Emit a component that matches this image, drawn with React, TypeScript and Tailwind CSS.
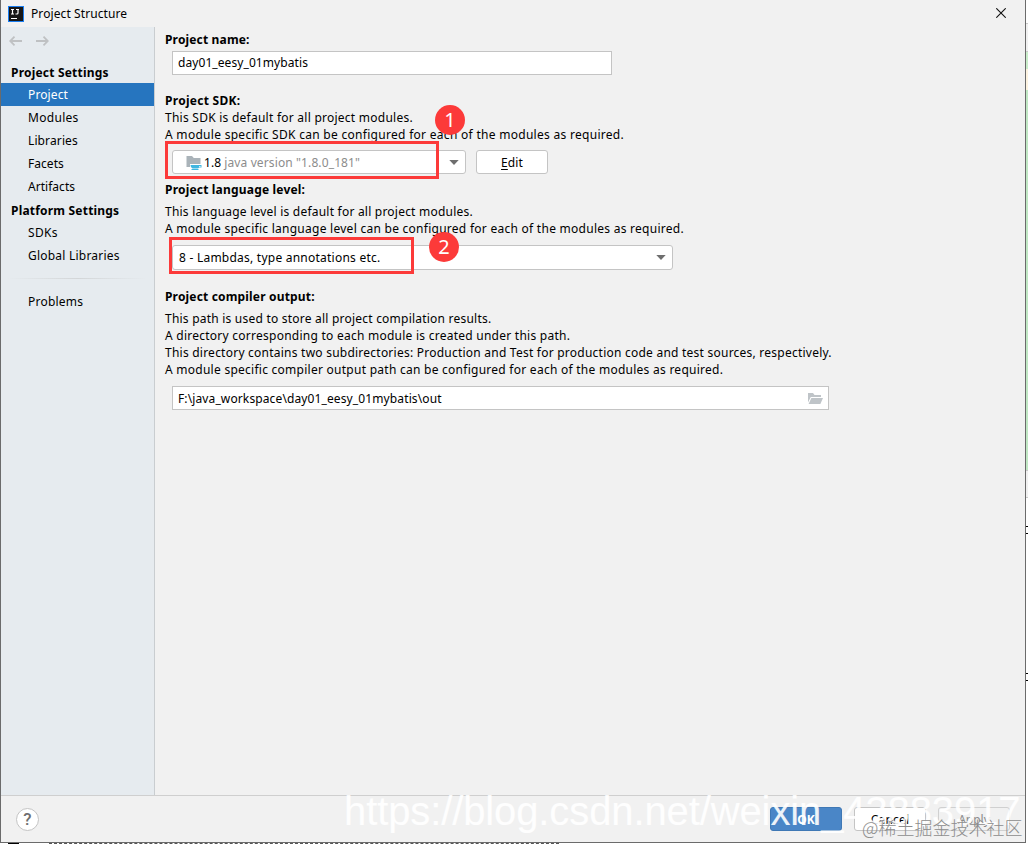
import React from 'react';

const ArrowDown: React.FC = () => (
  <svg className="h-[5px] w-[10px] shrink-0" viewBox="0 0 10 5">
    <path d="M0.3 0H9.7L5 5Z" fill="#6e6e6e" />
  </svg>
);

const SidebarItem: React.FC<{ label: string; spacing: string; selected?: boolean }> = ({
  label,
  spacing,
  selected,
}) => (
  <div
    className={`flex h-[23px] items-center pl-[27px] ${
      selected ? 'bg-[#2675bf] text-white' : ''
    }`}
  >
    <span className={spacing}>{label}</span>
  </div>
);

const SidebarGroup: React.FC<{ label: string; spacing: string }> = ({ label, spacing }) => (
  <div className="flex h-[23px] items-center pl-[10px] pt-[2px] font-bold">
    <span className={spacing}>{label}</span>
  </div>
);

const Line: React.FC<{ spacing: string; bold?: boolean; children: React.ReactNode }> = ({
  spacing,
  bold,
  children,
}) => (
  <div className={`h-[17px] leading-[17px] ${bold ? 'font-bold' : ''}`}>
    <span className={spacing}>{children}</span>
  </div>
);

const Sidebar: React.FC = () => (
  <aside className="w-[154px] shrink-0 border-r border-[#c9cdd0] bg-[#e6ebef]">
    <div className="flex h-[33px] items-start gap-[14px] pl-2 pt-[9px]">
      <svg className="h-[10px] w-[13px]" viewBox="0 0 13 10" fill="none" stroke="#bfc1c3" strokeWidth="1.8">
        <path d="M13 5H1.2M5.5 0.7L1.2 5L5.5 9.3" />
      </svg>
      <svg className="h-[10px] w-[13px]" viewBox="0 0 13 10" fill="none" stroke="#bfc1c3" strokeWidth="1.8">
        <path d="M0 5H11.8M7.5 0.7L11.8 5L7.5 9.3" />
      </svg>
    </div>
    <SidebarGroup label="Project Settings" spacing="tracking-[0.2px]" />
    <SidebarItem label="Project" spacing="tracking-[0.12px]" selected />
    <SidebarItem label="Modules" spacing="tracking-[0.3px]" />
    <SidebarItem label="Libraries" spacing="tracking-[0.12px]" />
    <SidebarItem label="Facets" spacing="tracking-[0.05px]" />
    <SidebarItem label="Artifacts" spacing="tracking-[0.03px]" />
    <SidebarGroup label="Platform Settings" spacing="tracking-[0.2px]" />
    <SidebarItem label="SDKs" spacing="tracking-[0.3px]" />
    <SidebarItem label="Global Libraries" spacing="tracking-[0.22px]" />
    <div className="mx-[7px] mb-[11px] mt-[11px] h-px bg-linear-to-r from-transparent via-[#d3d6d8] to-transparent" />
    <SidebarItem label="Problems" spacing="tracking-[0.22px]" />
  </aside>
);

const App: React.FC = () => {
  return (
    <div className="relative flex h-[844px] w-[1028px] overflow-hidden bg-white font-['Noto_Sans','Noto_Sans_CJK_SC',sans-serif] text-[12px] leading-[17px] text-black">
      <div className="w-[1026px]">
        <div className="flex h-[843px] flex-col border-b border-l border-r border-[#6b6b6b] bg-[#f1f1f1]">
          {/* Title bar */}
          <header className="flex h-[27px] shrink-0 items-center pl-[7px] pr-[19px]">
            <svg className="h-4 w-4" viewBox="0 0 16 16">
              <rect width="16" height="16" fill="#1a7df0" />
              <rect x="1" y="1" width="14" height="14" fill="#161616" />
              <path d="M3 3.5H6M4.5 3.5V8M3 8H6M8 3.5H11M10 3.5V7Q10 8 9 8H7.5" fill="none" stroke="#fff" strokeWidth="1.2" />
              <rect x="3" y="12" width="6" height="1" fill="#fff" />
            </svg>
            <span className="ml-[7px] tracking-[0.09px]">Project Structure</span>
            <svg className="mb-[2px] ml-auto h-[10px] w-[10px]" viewBox="0 0 10 10" stroke="#111" strokeWidth="1.1">
              <path d="M0.3 0.3L9.7 9.7M9.7 0.3L0.3 9.7" />
            </svg>
          </header>

          {/* Body */}
          <div className="flex h-[768px] shrink-0">
            <Sidebar />
            <main className="flex flex-1 flex-col pl-[10px] pt-1">
              <Line bold spacing="tracking-[0.16px]">Project name:</Line>
              <div className="ml-[7px] mt-[3px] flex h-6 w-[440px] items-center border border-[#c4c4c4] bg-white pb-px pl-[5px]">
                <span className="tracking-[0.08px]">day01_eesy_01mybatis</span>
              </div>

              <div className="mt-[17px]">
                <Line bold spacing="tracking-[0.28px]">Project SDK:</Line>
                <Line spacing="tracking-[0.25px]">This SDK is default for all project modules.</Line>
                <Line spacing="tracking-[0.29px]">
                  A module specific SDK can be configured for each of the modules as required.
                </Line>
              </div>
              <div className="ml-[7px] mt-[7px] flex gap-[10px]">
                <div className="flex h-6 w-[294px] items-center rounded-[3px] border border-[#c4c4c4] bg-white pl-[13px] pr-[6px]">
                  <svg className="mt-px h-[14px] w-[16px]" viewBox="0 0 16 14">
                    <path d="M0.5 0H6L7.8 2H14.5V8H4V11H0.5Z" fill="#aab3b9" />
                    <path d="M4.5 9H15.5V11.5H13.2Q12.5 12.5 11.5 12.6H6.5Q4.5 12 4.5 9Z" fill="#40b6e0" />
                    <path d="M13 10H14.6V10.8H13Z" fill="#fff" />
                    <path d="M5.5 13H12.5V14H5.5Z" fill="#40b6e0" />
                  </svg>
                  <span className="ml-[2px] tracking-[0.1px]">1.8</span>
                  <span className="ml-[3px] tracking-[0.12px] text-[#8c8c8c]">java version "1.8.0_181"</span>
                  <div className="ml-auto">
                    <ArrowDown />
                  </div>
                </div>
                <button className="h-6 w-[72px] rounded-[3px] border border-[#c4c4c4] bg-white text-center leading-[23px] tracking-[0.1px]">
                  <span className="underline underline-offset-2">E</span>dit
                </button>
              </div>

              <div className="mt-[7px]">
                <Line bold spacing="tracking-[0.19px]">Project language level:</Line>
              </div>
              <div className="mt-[5px]">
                <Line spacing="tracking-[0.22px]">This language level is default for all project modules.</Line>
                <Line spacing="tracking-[0.265px]">
                  A module specific language level can be configured for each of the modules as required.
                </Line>
              </div>
              <div className="ml-[7px] mt-2 flex h-[25px] w-[501px] items-center justify-between rounded-[3px] border border-[#c4c4c4] bg-white pl-[6px] pr-[6px]">
                <span className="tracking-[0.235px]">8 - Lambdas, type annotations etc.</span>
                <ArrowDown />
              </div>

              <div className="mt-[18px]">
                <Line bold spacing="tracking-[0.17px]">Project compiler output:</Line>
              </div>
              <div className="mt-[5px]">
                <Line spacing="tracking-[0.22px]">This path is used to store all project compilation results.</Line>
                <Line spacing="tracking-[0.25px]">A directory corresponding to each module is created under this path.</Line>
                <Line spacing="tracking-[0.235px]">
                  This directory contains two subdirectories: Production and Test for production code and test sources, respectively.
                </Line>
                <Line spacing="tracking-[0.26px]">
                  A module specific compiler output path can be configured for each of the modules as required.
                </Line>
              </div>
              <div className="ml-[7px] mt-2 flex h-6 w-[657px] items-center justify-between border border-[#c4c4c4] bg-white pl-[5px] pr-[5px]">
                <span className="tracking-[0.12px]">F:\java_workspace\day01_eesy_01mybatis\out</span>
                <svg className="h-[11px] w-[15px]" viewBox="0 0 15 11" fill="#bfc4c8">
                  <path d="M0 9.5V0H5L6.5 2H13V4H2.8Z" />
                  <path d="M3.4 5H15L12.4 11H0.6Z" />
                </svg>
              </div>
            </main>
          </div>

          {/* Footer */}
          <footer className="flex flex-1 items-start border-t border-[#cfcfcf] pl-[15px] pr-[15px] pt-[11px]">
            <div className="mt-px flex h-[23px] w-[23px] items-center justify-center rounded-full border border-[#c4c4c4] bg-white font-['Roboto',sans-serif] text-[17px] font-medium text-[#6e6e6e]">
              ?
            </div>
            <div className="ml-auto flex gap-3">
              <button className="h-6 w-[72px] rounded-[3px] border border-[#3f78b5] bg-[#4a86c7] font-bold text-white">OK</button>
              <button className="h-6 w-[72px] rounded-[3px] border border-[#c4c4c4] bg-white tracking-[0.2px]">Cancel</button>
              <button className="h-6 w-[72px] rounded-[3px] border border-[#d0d0d0] text-[#8c8c8c]">Apply</button>
            </div>
          </footer>
        </div>
        {/* Top edge of the editor line below the dialog */}
        <div className="flex h-px gap-[30px] pl-2">
          <div className="w-[11px] bg-black" />
          <div className="w-[510px] border-t border-dashed border-[#555]" />
        </div>
      </div>

      {/* Editor strip behind the dialog */}
      <div className="h-[844px] w-[2px] bg-white">
        <div className="h-[24px] border-b border-[#c9c9c9]" />
        <div className="h-[28px] border-b border-[#c9c9c9] bg-[#f1f1f1]" />
        <div className="h-[17px] bg-[#c9edca]" />
        <div className="h-[21px] bg-[#fdf3e0]" />
        <div className="h-[380px] bg-[#c0e8c4]" />
        <div className="h-[28px] border-b border-t border-[#c9c9c9] bg-[#f1f1f1]" />
        <div className="mt-[28px] h-[8px] border-b border-t border-black" />
        <div className="mt-[139px] h-[8px] border-b border-t border-black" />
      </div>

      {/* Annotations */}
      <div className="absolute left-[165px] top-[141px] h-[38px] w-[274px] border-3 border-[#fc3a39]" />
      <div className="absolute left-[169px] top-[237px] h-[37px] w-[245px] border-3 border-[#fc3a39]" />
      <div className="absolute left-[435px] top-[105px] h-[30px] w-[30px] rounded-full bg-[#fc3a39] text-center text-[20px] leading-[29px] text-white">
        1
      </div>
      <div className="absolute left-[429px] top-[232px] h-[30px] w-[30px] rounded-full bg-[#fc3a39] text-center text-[20px] leading-[29px] text-white">
        2
      </div>

      {/* Watermarks */}
      <div className="absolute left-[344px] top-[788px] whitespace-nowrap font-['Liberation_Sans',sans-serif] text-[40px] leading-[46px] tracking-[-0.11px] text-white/90">
        https://blog.csdn.net/weixin_43883917
      </div>
      <div className="absolute left-[862px] top-[814px] whitespace-nowrap font-['Noto_Sans_CJK_SC',sans-serif] text-[18px] font-light leading-[26px] text-[#8d8d8d]">
        @稀土掘金技术社区
      </div>
    </div>
  );
};

export default App;
